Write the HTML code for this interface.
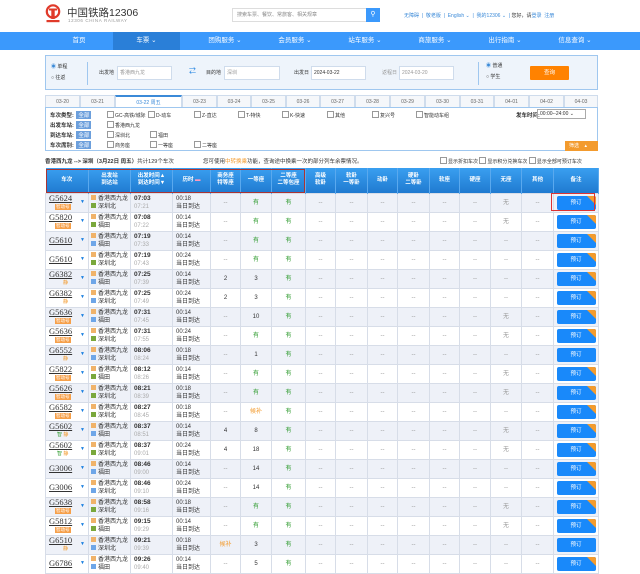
<!DOCTYPE html>
<html><head><meta charset="utf-8">
<style>
*{margin:0;padding:0;box-sizing:border-box}
body{width:640px;height:560px;overflow:hidden;background:#fff;font-family:"Liberation Sans","Noto Sans CJK SC",sans-serif;font-size:6px;color:#333;position:relative}
.a{position:absolute}
.nav{top:32px;left:0;width:640px;height:18px;background:#3b99fc}
.nav span{position:absolute;top:0;height:18px;line-height:18px;color:#fff;font-size:6.5px;text-align:center;width:70px}
.sb{top:55px;left:45px;width:553px;height:35px;border:1px solid #9fc7ef;background:#eef4fb}
.inp{position:absolute;height:14px;background:#fff;border:1px solid #cfdcec;font-size:5px;color:#999;line-height:12px;padding-left:2px}
.tabs{top:95px;left:45px;width:553px;height:13px}
.tabs div{position:absolute;top:0;height:13px;border:1px solid #cfdcec;border-bottom:none;background:#f5f7fa;text-align:center;line-height:12px;font-size:5px;color:#666}
.fp{top:107px;left:45px;width:553px;height:44px;border:1px solid #9fc7ef;background:#fff}
.fl{position:absolute;left:4px;font-size:5.5px;font-weight:bold;color:#333}
.all{display:inline-block;background:#6c9fdc;color:#fff;padding:0 2px;font-weight:normal;margin-left:1px}
.cb{position:absolute;font-size:5px;color:#333}
.cb:before{content:"";display:inline-block;width:5px;height:5px;border:1px solid #999;margin-right:1px;vertical-align:-1px}
table{position:absolute;left:45px;top:168px;width:553px;border-collapse:collapse;table-layout:fixed}
th{height:25px;background:linear-gradient(#3a9ff0,#1f7ad0);color:#fff;font-size:5.5px;font-weight:bold;line-height:7px;border-right:1px solid #5aa9ee}
td{height:19px;border:1px solid #d7dde8;text-align:center;font-size:6px;color:#999;line-height:8px;padding:0;white-space:nowrap;overflow:hidden}
tr:nth-child(even) td{background:#eef1f8}
tr:nth-child(odd) td{background:#fff}
.n{text-align:left;padding-left:3px;position:relative}
.n b{font-family:"Liberation Serif",serif;font-size:8.5px;color:#333;text-decoration:underline;font-weight:normal;display:block;line-height:9px}
.n i{position:absolute;left:34px;top:4px;color:#1a7fe0;font-style:normal;font-size:5px}
.tg{display:inline-block;background:#f6a04a;color:#fff;font-size:4.5px;line-height:6px;padding:0 1px;margin-left:6px}
.tj{display:inline-block;color:#f39b2e;font-size:5px;margin-left:14px;line-height:7px}
.st{text-align:left;color:#333;padding-left:2px}
.st u{display:inline-block;width:5px;height:5px;background:#f0b36a;margin-right:2px;text-decoration:none;vertical-align:0}
.st u.g{background:#7aa83c}.st u.b{background:#6ea6e8}
.tm{text-align:left;padding-left:3px}
.tm b{color:#333;font-size:6.5px}
.tm span{color:#aaa}
.du{text-align:left;padding-left:3px;color:#333}
.y{color:#2e9b2e}.k{color:#333}.h{color:#f39b2e}
.bt{position:relative}
.bt div{width:39px;height:14px;margin:0 auto;background:#1989fa;color:#fff;border-radius:2px;line-height:14px;font-size:5.5px;position:relative;overflow:hidden}
.bt div.c:after{content:"";position:absolute;right:0;top:0;border-style:solid;border-width:0 9px 9px 0;border-color:transparent #f39b2e transparent transparent}
</style></head><body>

<div class="a" style="left:45px;top:4px;width:16px;height:20px">
<svg width="16" height="20" viewBox="0 0 16 20"><circle cx="8" cy="7.5" r="6.2" fill="none" stroke="#e03a2a" stroke-width="2.2"/><rect x="6.3" y="6" width="3.4" height="9" fill="#e03a2a"/><rect x="1.5" y="16" width="13" height="2.2" fill="#e03a2a"/><rect x="4" y="4.5" width="8" height="2" fill="#e03a2a"/></svg></div>
<div class="a" style="left:67px;top:5px;font-size:10.5px;color:#333">中国铁路12306</div>
<div class="a" style="left:68px;top:18px;font-size:4.5px;color:#999;letter-spacing:.6px">12306 CHINA RAILWAY</div>
<div class="a" style="left:232px;top:8px;width:136px;height:14px;border:1px solid #ddd;font-size:5px;color:#888;line-height:12px;padding-left:4px">搜索车票、餐饮、常旅客、相关规章</div>
<div class="a" style="left:366px;top:8px;width:14px;height:14px;background:#3b99fc;color:#fff;font-size:7px;text-align:center;line-height:13px">⚲</div>
<div class="a" style="left:404px;top:12px;font-size:5px;color:#3b8ad8">无障碍 &nbsp;| &nbsp;敬老版 &nbsp;| &nbsp;English ⌄ &nbsp;| &nbsp;我的12306 ⌄ &nbsp;| <span style="color:#333">您好，请</span>登录 &nbsp;注册</div>

<div class="a nav">
<span style="left:44px">首页</span>
<span style="left:113px;width:67px;background:#2a7fd8">车票 ⌄</span>
<span style="left:190px">团购服务 ⌄</span>
<span style="left:260px">会员服务 ⌄</span>
<span style="left:330px">站车服务 ⌄</span>
<span style="left:400px">商旅服务 ⌄</span>
<span style="left:470px">出行指南 ⌄</span>
<span style="left:540px">信息查询 ⌄</span>
</div>

<div class="a sb">
<div class="a" style="left:5px;top:6px;font-size:5px;line-height:11px"><span style="color:#3b8ad8">◉</span> 单程<br>○ 往返</div>
<div class="a" style="left:41px;top:6px;width:1px;height:23px;background:#9fc7ef"></div>
<div class="a" style="left:53px;top:13px;font-size:5px">出发地</div>
<div class="inp" style="left:71px;top:10px;width:55px">香港西九龙</div>
<div class="a" style="left:143px;top:10px;color:#1a7fe0;font-size:7px">⇄</div>
<div class="a" style="left:160px;top:13px;font-size:5px">目的地</div>
<div class="inp" style="left:178px;top:10px;width:56px">深圳</div>
<div class="a" style="left:248px;top:13px;font-size:5px">出发日</div>
<div class="inp" style="left:265px;top:10px;width:55px;color:#333">2024-03-22</div>
<div class="a" style="left:336px;top:13px;font-size:5px;color:#999">返程日</div>
<div class="inp" style="left:353px;top:10px;width:55px">2024-03-20</div>
<div class="a" style="left:432px;top:6px;width:1px;height:23px;background:#9fc7ef"></div>
<div class="a" style="left:440px;top:5px;font-size:5px;line-height:11px"><span style="color:#3b8ad8">◉</span> 普通<br>○ 学生</div>
<div class="a" style="left:484px;top:10px;width:39px;height:14px;background:#ff8200;color:#fff;font-size:5.5px;text-align:center;line-height:14px;border-radius:1px">查询</div>
</div>

<div class="a tabs">
<div style="left:0;width:35px">03-20</div><div style="left:35px;width:35px">03-21</div>
<div style="left:70px;width:67px;background:#fff;color:#3b8ad8;border-top:2px solid #3b8ad8">03-22 周五</div>
<div style="left:137px;width:35px">03-23</div><div style="left:172px;width:34px">03-24</div><div style="left:206px;width:35px">03-25</div><div style="left:241px;width:34px">03-26</div><div style="left:275px;width:35px">03-27</div><div style="left:310px;width:35px">03-28</div><div style="left:345px;width:35px">03-29</div><div style="left:380px;width:35px">03-30</div><div style="left:415px;width:34px">03-31</div><div style="left:449px;width:35px">04-01</div><div style="left:484px;width:35px">04-02</div><div style="left:519px;width:34px">04-03</div>
</div>

<div class="a fp">
<div class="fl" style="top:3px">车次类型: <span class="all">全部</span></div>
<span class="cb" style="left:61px;top:3px">GC-高铁/城际</span><span class="cb" style="left:102px;top:3px">D-动车</span><span class="cb" style="left:148px;top:3px">Z-直达</span><span class="cb" style="left:192px;top:3px">T-特快</span><span class="cb" style="left:236px;top:3px">K-快速</span><span class="cb" style="left:281px;top:3px">其他</span><span class="cb" style="left:326px;top:3px">复兴号</span><span class="cb" style="left:370px;top:3px">智能动车组</span>
<div class="a" style="left:470px;top:3px;font-size:5.5px;font-weight:bold">发车时间:</div>
<div class="a" style="left:491px;top:1px;width:49px;height:10px;border:1px solid #aaa;font-size:5px;line-height:8px;padding-left:2px">00:00--24:00 ⌄</div>
<div class="fl" style="top:13px">出发车站: <span class="all">全部</span></div><span class="cb" style="left:61px;top:13px">香港西九龙</span>
<div class="fl" style="top:23px">到达车站: <span class="all">全部</span></div><span class="cb" style="left:61px;top:23px">深圳北</span><span class="cb" style="left:104px;top:23px">福田</span>
<div class="fl" style="top:33px">车次席别: <span class="all">全部</span></div><span class="cb" style="left:61px;top:33px">商务座</span><span class="cb" style="left:104px;top:33px">一等座</span><span class="cb" style="left:148px;top:33px">二等座</span>
<div class="a" style="left:519px;top:33px;width:33px;height:10px;background:#f39b2e;color:#fff;font-size:5px;line-height:10px;padding-left:4px">筛选 &nbsp; &nbsp;▴</div>
</div>

<div class="a" style="left:45px;top:157px;font-size:5.5px;font-weight:bold">香港西九龙 --&gt; 深圳（3月22日 周五）<span style="font-weight:normal">共计129个车次</span></div>
<div class="a" style="left:203px;top:157px;font-size:5.5px">您可使用<span style="color:#f39b2e">中转换乘</span>功能，查询途中换乘一次的部分列车余票情况。</div>
<div class="a" style="left:440px;top:157px;font-size:5px"><span class="cb" style="position:static">显示折扣车次</span> <span class="cb" style="position:static">显示积分兑换车次</span> <span class="cb" style="position:static">显示全部可预订车次</span></div>

<table>
<colgroup><col style="width:43px"><col style="width:42px"><col style="width:42px"><col style="width:38px"><col style="width:30px"><col style="width:31px"><col style="width:34px"><col style="width:30px"><col style="width:32px"><col style="width:30px"><col style="width:32px"><col style="width:30px"><col style="width:31px"><col style="width:31px"><col style="width:32px"><col style="width:45px"></colgroup>
<tr><th>车次</th><th>出发站<br>到达站</th><th>出发时间▲<br>到达时间▼</th><th>历时 <span style="color:#f9b">▬</span></th><th>商务座<br>特等座</th><th>一等座</th><th>二等座<br>二等包座</th><th>高级<br>软卧</th><th>软卧<br>一等卧</th><th>动卧</th><th>硬卧<br>二等卧</th><th>软座</th><th>硬座</th><th>无座</th><th>其他</th><th>备注</th></tr>

<tr><td class="n"><b>G5624</b><i>▼</i><span class="tg">智动号</span></td><td class="st"><u></u>香港西九龙<br><u class="g"></u>深圳北</td><td class="tm"><b>07:03</b><br><span>07:21</span></td><td class="du">00:18<br>当日到达</td><td>--</td><td class="y">有</td><td class="y">有</td><td>--</td><td>--</td><td>--</td><td>--</td><td>--</td><td>--</td><td>无</td><td>--</td><td class="bt"><div class="c">预订</div></td></tr>
<tr><td class="n"><b>G5820</b><i>▼</i><span class="tg">智动号</span></td><td class="st"><u></u>香港西九龙<br><u class="g"></u>福田</td><td class="tm"><b>07:08</b><br><span>07:22</span></td><td class="du">00:14<br>当日到达</td><td>--</td><td class="y">有</td><td class="y">有</td><td>--</td><td>--</td><td>--</td><td>--</td><td>--</td><td>--</td><td>无</td><td>--</td><td class="bt"><div class="c">预订</div></td></tr>
<tr><td class="n"><b>G5610</b><i>▼</i></td><td class="st"><u></u>香港西九龙<br><u class="b"></u>福田</td><td class="tm"><b>07:19</b><br><span>07:33</span></td><td class="du">00:14<br>当日到达</td><td>--</td><td class="y">有</td><td class="y">有</td><td>--</td><td>--</td><td>--</td><td>--</td><td>--</td><td>--</td><td>--</td><td>--</td><td class="bt"><div class="c">预订</div></td></tr>
<tr><td class="n"><b>G5610</b><i>▼</i></td><td class="st"><u></u>香港西九龙<br><u class="g"></u>深圳北</td><td class="tm"><b>07:19</b><br><span>07:43</span></td><td class="du">00:24<br>当日到达</td><td>--</td><td class="y">有</td><td class="y">有</td><td>--</td><td>--</td><td>--</td><td>--</td><td>--</td><td>--</td><td>--</td><td>--</td><td class="bt"><div class="c">预订</div></td></tr>
<tr><td class="n"><b>G6382</b><i>▼</i><span class="tj">静</span></td><td class="st"><u></u>香港西九龙<br><u class="b"></u>福田</td><td class="tm"><b>07:25</b><br><span>07:39</span></td><td class="du">00:14<br>当日到达</td><td class="k">2</td><td class="k">3</td><td class="y">有</td><td>--</td><td>--</td><td>--</td><td>--</td><td>--</td><td>--</td><td>--</td><td>--</td><td class="bt"><div class="c">预订</div></td></tr>
<tr><td class="n"><b>G6382</b><i>▼</i><span class="tj">静</span></td><td class="st"><u></u>香港西九龙<br><u class="b"></u>深圳北</td><td class="tm"><b>07:25</b><br><span>07:49</span></td><td class="du">00:24<br>当日到达</td><td class="k">2</td><td class="k">3</td><td class="y">有</td><td>--</td><td>--</td><td>--</td><td>--</td><td>--</td><td>--</td><td>--</td><td>--</td><td class="bt"><div class="c">预订</div></td></tr>
<tr><td class="n"><b>G5636</b><i>▼</i><span class="tg">智动号</span></td><td class="st"><u></u>香港西九龙<br><u class="b"></u>福田</td><td class="tm"><b>07:31</b><br><span>07:45</span></td><td class="du">00:14<br>当日到达</td><td>--</td><td class="k">10</td><td class="y">有</td><td>--</td><td>--</td><td>--</td><td>--</td><td>--</td><td>--</td><td>无</td><td>--</td><td class="bt"><div class="c">预订</div></td></tr>
<tr><td class="n"><b>G5636</b><i>▼</i><span class="tg">智动号</span></td><td class="st"><u></u>香港西九龙<br><u class="g"></u>深圳北</td><td class="tm"><b>07:31</b><br><span>07:55</span></td><td class="du">00:24<br>当日到达</td><td>--</td><td class="y">有</td><td class="y">有</td><td>--</td><td>--</td><td>--</td><td>--</td><td>--</td><td>--</td><td>无</td><td>--</td><td class="bt"><div class="c">预订</div></td></tr>
<tr><td class="n"><b>G6552</b><i>▼</i><span class="tj">静</span></td><td class="st"><u></u>香港西九龙<br><u class="b"></u>深圳北</td><td class="tm"><b>08:06</b><br><span>08:24</span></td><td class="du">00:18<br>当日到达</td><td>--</td><td class="k">1</td><td class="y">有</td><td>--</td><td>--</td><td>--</td><td>--</td><td>--</td><td>--</td><td>--</td><td>--</td><td class="bt"><div>预订</div></td></tr>
<tr><td class="n"><b>G5822</b><i>▼</i><span class="tg">智动号</span></td><td class="st"><u></u>香港西九龙<br><u class="g"></u>福田</td><td class="tm"><b>08:12</b><br><span>08:26</span></td><td class="du">00:14<br>当日到达</td><td>--</td><td class="y">有</td><td class="y">有</td><td>--</td><td>--</td><td>--</td><td>--</td><td>--</td><td>--</td><td>无</td><td>--</td><td class="bt"><div class="c">预订</div></td></tr>
<tr><td class="n"><b>G5626</b><i>▼</i><span class="tg">智动号</span></td><td class="st"><u></u>香港西九龙<br><u class="g"></u>深圳北</td><td class="tm"><b>08:21</b><br><span>08:39</span></td><td class="du">00:18<br>当日到达</td><td>--</td><td class="y">有</td><td class="y">有</td><td>--</td><td>--</td><td>--</td><td>--</td><td>--</td><td>--</td><td>无</td><td>--</td><td class="bt"><div class="c">预订</div></td></tr>
<tr><td class="n"><b>G6582</b><i>▼</i><span class="tg">智动号</span></td><td class="st"><u></u>香港西九龙<br><u class="g"></u>深圳北</td><td class="tm"><b>08:27</b><br><span>08:45</span></td><td class="du">00:18<br>当日到达</td><td>--</td><td class="h">候补</td><td class="y">有</td><td>--</td><td>--</td><td>--</td><td>--</td><td>--</td><td>--</td><td>--</td><td>--</td><td class="bt"><div class="c">预订</div></td></tr>
<tr><td class="n"><b>G5602</b><i>▼</i><span class="tj" style="margin-left:8px"><span style="color:#2e9b2e">智</span> 静</span></td><td class="st"><u></u>香港西九龙<br><u class="b"></u>福田</td><td class="tm"><b>08:37</b><br><span>08:51</span></td><td class="du">00:14<br>当日到达</td><td class="k">4</td><td class="k">8</td><td class="y">有</td><td>--</td><td>--</td><td>--</td><td>--</td><td>--</td><td>--</td><td>无</td><td>--</td><td class="bt"><div class="c">预订</div></td></tr>
<tr><td class="n"><b>G5602</b><i>▼</i><span class="tj" style="margin-left:8px"><span style="color:#2e9b2e">智</span> 静</span></td><td class="st"><u></u>香港西九龙<br><u class="g"></u>深圳北</td><td class="tm"><b>08:37</b><br><span>09:01</span></td><td class="du">00:24<br>当日到达</td><td class="k">4</td><td class="k">18</td><td class="y">有</td><td>--</td><td>--</td><td>--</td><td>--</td><td>--</td><td>--</td><td>无</td><td>--</td><td class="bt"><div class="c">预订</div></td></tr>
<tr><td class="n"><b>G3006</b><i>▼</i></td><td class="st"><u></u>香港西九龙<br><u class="b"></u>福田</td><td class="tm"><b>08:46</b><br><span>09:00</span></td><td class="du">00:14<br>当日到达</td><td>--</td><td class="k">14</td><td class="y">有</td><td>--</td><td>--</td><td>--</td><td>--</td><td>--</td><td>--</td><td>--</td><td>--</td><td class="bt"><div class="c">预订</div></td></tr>
<tr><td class="n"><b>G3006</b><i>▼</i></td><td class="st"><u></u>香港西九龙<br><u class="b"></u>深圳北</td><td class="tm"><b>08:46</b><br><span>09:10</span></td><td class="du">00:24<br>当日到达</td><td>--</td><td class="k">14</td><td class="y">有</td><td>--</td><td>--</td><td>--</td><td>--</td><td>--</td><td>--</td><td>--</td><td>--</td><td class="bt"><div class="c">预订</div></td></tr>
<tr><td class="n"><b>G5638</b><i>▼</i><span class="tg">智动号</span></td><td class="st"><u></u>香港西九龙<br><u class="g"></u>深圳北</td><td class="tm"><b>08:58</b><br><span>09:16</span></td><td class="du">00:18<br>当日到达</td><td>--</td><td class="y">有</td><td class="y">有</td><td>--</td><td>--</td><td>--</td><td>--</td><td>--</td><td>--</td><td>无</td><td>--</td><td class="bt"><div class="c">预订</div></td></tr>
<tr><td class="n"><b>G5812</b><i>▼</i><span class="tg">智动号</span></td><td class="st"><u></u>香港西九龙<br><u class="g"></u>福田</td><td class="tm"><b>09:15</b><br><span>09:29</span></td><td class="du">00:14<br>当日到达</td><td>--</td><td class="y">有</td><td class="y">有</td><td>--</td><td>--</td><td>--</td><td>--</td><td>--</td><td>--</td><td>无</td><td>--</td><td class="bt"><div class="c">预订</div></td></tr>
<tr><td class="n"><b>G6510</b><i>▼</i><span class="tj">静</span></td><td class="st"><u></u>香港西九龙<br><u class="b"></u>深圳北</td><td class="tm"><b>09:21</b><br><span>09:39</span></td><td class="du">00:18<br>当日到达</td><td class="h">候补</td><td class="k">3</td><td class="y">有</td><td>--</td><td>--</td><td>--</td><td>--</td><td>--</td><td>--</td><td>--</td><td>--</td><td class="bt"><div>预订</div></td></tr>
<tr><td class="n"><b>G6786</b><i>▼</i></td><td class="st"><u></u>香港西九龙<br><u class="b"></u>福田</td><td class="tm"><b>09:26</b><br><span>09:40</span></td><td class="du">00:14<br>当日到达</td><td>--</td><td class="k">5</td><td class="y">有</td><td>--</td><td>--</td><td>--</td><td>--</td><td>--</td><td>--</td><td>--</td><td>--</td><td class="bt"><div class="c">预订</div></td></tr>
</table>

<div class="a" style="left:46px;top:169px;width:259px;height:24px;border:1px solid #a33"></div>
<div class="a" style="left:551px;top:193px;width:44px;height:18px;border:1px solid #d33"></div>
</body></html>
